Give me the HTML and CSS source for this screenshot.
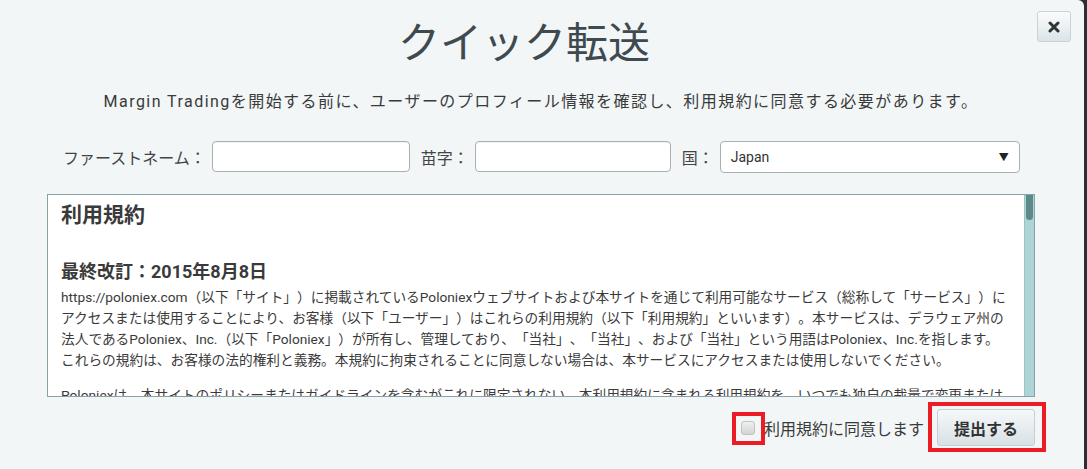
FILE: index.html
```html
<!DOCTYPE html>
<html>
<head>
    <title>クイック転送</title>
    <meta charset="utf-8">
    <link rel="stylesheet" href="styles.css">
</head>
<body>
    <div class="dialog">
        <button class="close" title="閉じる">
            <svg width="12" height="12" viewBox="0 0 12 12"><path d="M2 2 L10 10 M10 2 L2 10" stroke="#2f3436" stroke-width="3" stroke-linecap="round"/></svg>
        </button>

        <h1>クイック転送</h1>
        <p class="lead">Margin Tradingを開始する前に、ユーザーのプロフィール情報を確認し、利用規約に同意する必要があります。</p>

        <!-- profile -->
        <div class="form-row">
            <label>ファーストネーム：</label>
            <input type="text" class="field first">
            <label>苗字：</label>
            <input type="text" class="field last">
            <label>国：</label>
            <div class="select">
                <span>Japan</span>
                <span class="arrow">▼</span>
            </div>
        </div>

        <!-- terms -->
        <div class="terms">
            <div class="terms-body">
                <h2>利用規約</h2>
                <h3>最終改訂：2015年8月8日</h3>
                <p>https://poloniex.com（以下「サイト」）に掲載されているPoloniexウェブサイトおよび本サイトを通じて利用可能なサービス（総称して「サービス」）に<br>アクセスまたは使用することにより、お客様（以下「ユーザー」）はこれらの利用規約（以下「利用規約」といいます）。本サービスは、デラウェア州の<br>法人であるPoloniex、Inc.（以下「Poloniex」）が所有し、管理しており、「当社」、「当社」、および「当社」という用語はPoloniex、Inc.を指します。<br>これらの規約は、お客様の法的権利と義務。本規約に拘束されることに同意しない場合は、本サービスにアクセスまたは使用しないでください。</p>
                <p>Poloniexは、本サイトのポリシーまたはガイドラインを含むがこれに限定されない、本利用規約に含まれる利用規約を、いつでも独自の裁量で変更または<br>修正する権利を留保します。変更または修正を行った場合、本利用規約の上部にある「最終改訂」の日付を更新してお知らせします。</p>
            </div>
            <div class="scrollbar"><div class="thumb"></div></div>
        </div>

        <div class="actions">
            <span class="mark mark-check"><input type="checkbox" class="agree"></span>
            <span class="agree-text">利用規約に同意します</span>
            <span class="mark mark-btn"><button class="submit">提出する</button></span>
        </div>
    </div>
</body>
</html>
```

FILE: styles.css
```css
* { margin: 0; padding: 0; box-sizing: border-box; }
body { background: #2b2f31; font-family: Roboto, "Noto Sans CJK JP", sans-serif; color: #3a3a3a; overflow: hidden; text-spacing-trim: space-all; }
.dialog { position: relative; width: 1084px; height: 469px; background: #f2f6f7; border-top-right-radius: 6px; padding: 19px 49px 0 47px; }

.close { position: absolute; top: 11px; right: 13px; width: 34px; height: 31px; border: 1px solid #c6d3d8; border-radius: 3px; background: linear-gradient(#fbfcfc, #dbe4e8); display: flex; align-items: center; justify-content: center; }

h1 { font-weight: normal; font-size: 42px; line-height: 50px; text-align: center; padding-right: 34px; color: #3e4a4f; }
.lead { margin-top: 21px; font-size: 16px; line-height: 24px; text-align: center; letter-spacing: 1.45px; }

.form-row { display: flex; align-items: center; height: 31px; margin-top: 27px; padding-left: 16px; }
.form-row label { font-size: 16px; margin-right: 6px; color: #444; }
.field { height: 31px; border: 1px solid #a9b0b3; border-radius: 4px; background: #fff; margin-right: 11px; box-shadow: inset 0 1px 1px rgba(0,0,0,0.06); }
.first { width: 198px; }
.last { width: 196px; }
.select { width: 300px; height: 32px; border: 1px solid #a9b0b3; border-radius: 4px; background: #fff; display: flex; align-items: center; justify-content: space-between; padding: 0 10px 0 10px; font-size: 14px; color: #333; }
.select .arrow { font-size: 10px; color: #222; }

.terms { margin-top: 22px; height: 203px; border: 1px solid #87a3a5; background: #fff; display: flex; color: #3a3a3a; }
.terms-body { flex: 1; overflow: hidden; padding: 6px 0 0 13px; }
.scrollbar { width: 10px; background: #afd4d6; border-left: 1px solid #9cc3c5; padding: 0 1px 0 1px; }
.thumb { height: 25px; background: #5d8a89; border-radius: 0 0 4px 4px; }
.terms h2 { font-size: 21px; line-height: 28px; font-weight: bold; }
.terms h3 { font-size: 18px; line-height: 24px; font-weight: bold; margin-top: 31px; }
.terms p { font-size: 13.7px; line-height: 21px; margin-top: 3px; white-space: nowrap; }
.terms p + p { margin-top: 14px; }

.actions { display: flex; justify-content: flex-end; align-items: center; margin-top: 12px; height: 37px; }
.mark { position: relative; display: inline-flex; }
.mark::after { content: ""; position: absolute; border: 4px solid #ec1c24; pointer-events: none; }
.mark-check::after { left: -9px; right: -10px; top: -9px; bottom: -10px; }
.mark-btn::after { left: -9px; right: -11px; top: -7px; bottom: -6px; }
.agree { appearance: none; -webkit-appearance: none; width: 14px; height: 14px; border: 1px solid #c2c2c2; border-radius: 3px; background: linear-gradient(#efefef, #d3d3d3); }
.agree-text { font-size: 16px; margin: 0 13px 0 9px; color: #3a3a3a; }
.submit { width: 98px; height: 37px; border: 1px solid #c3d0d5; border-radius: 3px; background: linear-gradient(#f6f8f9, #d8e1e5); font: bold 16px Roboto, "Noto Sans CJK JP", sans-serif; color: #333; }
```
